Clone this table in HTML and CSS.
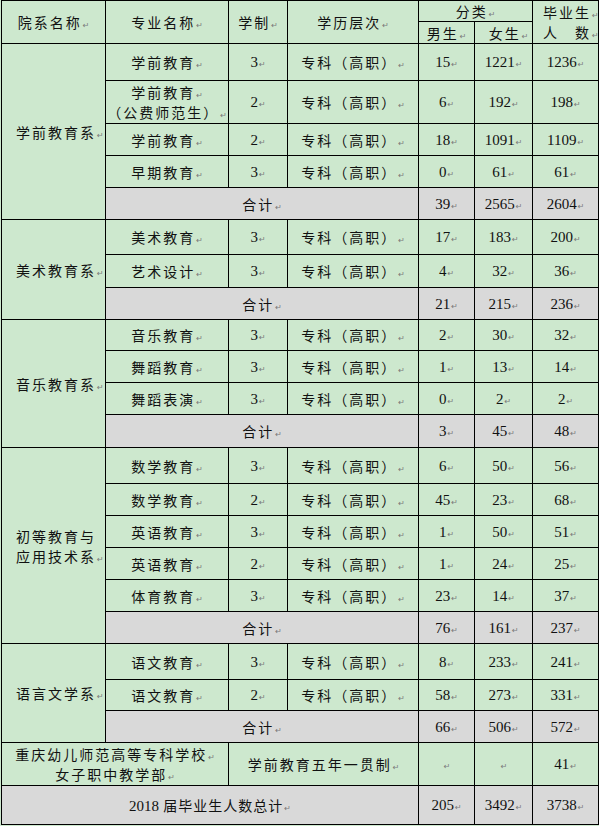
FILE: index.html
```html
<!DOCTYPE html>
<html lang="zh-CN">
<head>
<meta charset="utf-8">
<title>2018届毕业生人数</title>
<link rel="stylesheet" href="styles.css">
</head>
<body>
<table class="grid">
<colgroup>
<col class="c1"><col class="c2"><col class="c3"><col class="c4"><col class="c5"><col class="c6"><col class="c7">
</colgroup>
<tr class="r21">
<th rowspan="2">院系名称<span class="m">↵</span></th>
<th rowspan="2">专业名称<span class="m">↵</span></th>
<th rowspan="2">学制<span class="m">↵</span></th>
<th rowspan="2">学历层次<span class="m">↵</span></th>
<th colspan="2">分类<span class="m">↵</span></th>
<th rowspan="2" class="grad">毕业生<span class="m">↵</span><br>人　数<span class="m">↵</span></th>
</tr>
<tr class="r22"><th>男生<span class="m">↵</span></th><th class="fem">女生<span class="m">↵</span></th></tr>

<tr class="r37"><td rowspan="5" class="dept">学前教育系<span class="m">↵</span></td><td>学前教育<span class="m">↵</span></td><td class="n">3<span class="m">↵</span></td><td>专科（高职）<span class="m">↵</span></td><td class="n">15<span class="m">↵</span></td><td class="n">1221<span class="m">↵</span></td><td class="n">1236<span class="m">↵</span></td></tr>
<tr class="r43"><td class="two">学前教育<span class="m">↵</span><br>（公费师范生）<span class="m">↵</span></td><td class="n">2<span class="m">↵</span></td><td>专科（高职）<span class="m">↵</span></td><td class="n">6<span class="m">↵</span></td><td class="n">192<span class="m">↵</span></td><td class="n">198<span class="m">↵</span></td></tr>
<tr class="r32"><td>学前教育<span class="m">↵</span></td><td class="n">2<span class="m">↵</span></td><td>专科（高职）<span class="m">↵</span></td><td class="n">18<span class="m">↵</span></td><td class="n">1091<span class="m">↵</span></td><td class="n">1109<span class="m">↵</span></td></tr>
<tr class="r32"><td>早期教育<span class="m">↵</span></td><td class="n">3<span class="m">↵</span></td><td>专科（高职）<span class="m">↵</span></td><td class="n">0<span class="m">↵</span></td><td class="n">61<span class="m">↵</span></td><td class="n">61<span class="m">↵</span></td></tr>
<tr class="r32"><td colspan="3" class="g">合计<span class="m">↵</span></td><td class="n g">39<span class="m">↵</span></td><td class="n g">2565<span class="m">↵</span></td><td class="n g">2604<span class="m">↵</span></td></tr>

<tr class="r35"><td rowspan="3" class="dept">美术教育系<span class="m">↵</span></td><td>美术教育<span class="m">↵</span></td><td class="n">3<span class="m">↵</span></td><td>专科（高职）<span class="m">↵</span></td><td class="n">17<span class="m">↵</span></td><td class="n">183<span class="m">↵</span></td><td class="n">200<span class="m">↵</span></td></tr>
<tr class="r33"><td>艺术设计<span class="m">↵</span></td><td class="n">3<span class="m">↵</span></td><td>专科（高职）<span class="m">↵</span></td><td class="n">4<span class="m">↵</span></td><td class="n">32<span class="m">↵</span></td><td class="n">36<span class="m">↵</span></td></tr>
<tr class="r32"><td colspan="3" class="g">合计<span class="m">↵</span></td><td class="n g">21<span class="m">↵</span></td><td class="n g">215<span class="m">↵</span></td><td class="n g">236<span class="m">↵</span></td></tr>

<tr class="r31"><td rowspan="4" class="dept">音乐教育系<span class="m">↵</span></td><td>音乐教育<span class="m">↵</span></td><td class="n">3<span class="m">↵</span></td><td>专科（高职）<span class="m">↵</span></td><td class="n">2<span class="m">↵</span></td><td class="n">30<span class="m">↵</span></td><td class="n">32<span class="m">↵</span></td></tr>
<tr class="r32"><td>舞蹈教育<span class="m">↵</span></td><td class="n">3<span class="m">↵</span></td><td>专科（高职）<span class="m">↵</span></td><td class="n">1<span class="m">↵</span></td><td class="n">13<span class="m">↵</span></td><td class="n">14<span class="m">↵</span></td></tr>
<tr class="r32"><td>舞蹈表演<span class="m">↵</span></td><td class="n">3<span class="m">↵</span></td><td>专科（高职）<span class="m">↵</span></td><td class="n">0<span class="m">↵</span></td><td class="n">2<span class="m">↵</span></td><td class="n">2<span class="m">↵</span></td></tr>
<tr class="r33"><td colspan="3" class="g">合计<span class="m">↵</span></td><td class="n g">3<span class="m">↵</span></td><td class="n g">45<span class="m">↵</span></td><td class="n g">48<span class="m">↵</span></td></tr>

<tr class="r36"><td rowspan="6" class="dept two">初等教育与<br>应用技术系<span class="m">↵</span></td><td>数学教育<span class="m">↵</span></td><td class="n">3<span class="m">↵</span></td><td>专科（高职）<span class="m">↵</span></td><td class="n">6<span class="m">↵</span></td><td class="n">50<span class="m">↵</span></td><td class="n">56<span class="m">↵</span></td></tr>
<tr class="r32"><td>数学教育<span class="m">↵</span></td><td class="n">2<span class="m">↵</span></td><td>专科（高职）<span class="m">↵</span></td><td class="n">45<span class="m">↵</span></td><td class="n">23<span class="m">↵</span></td><td class="n">68<span class="m">↵</span></td></tr>
<tr class="r32"><td>英语教育<span class="m">↵</span></td><td class="n">3<span class="m">↵</span></td><td>专科（高职）<span class="m">↵</span></td><td class="n">1<span class="m">↵</span></td><td class="n">50<span class="m">↵</span></td><td class="n">51<span class="m">↵</span></td></tr>
<tr class="r32"><td>英语教育<span class="m">↵</span></td><td class="n">2<span class="m">↵</span></td><td>专科（高职）<span class="m">↵</span></td><td class="n">1<span class="m">↵</span></td><td class="n">24<span class="m">↵</span></td><td class="n">25<span class="m">↵</span></td></tr>
<tr class="r32"><td>体育教育<span class="m">↵</span></td><td class="n">3<span class="m">↵</span></td><td>专科（高职）<span class="m">↵</span></td><td class="n">23<span class="m">↵</span></td><td class="n">14<span class="m">↵</span></td><td class="n">37<span class="m">↵</span></td></tr>
<tr class="r32"><td colspan="3" class="g">合计<span class="m">↵</span></td><td class="n g">76<span class="m">↵</span></td><td class="n g">161<span class="m">↵</span></td><td class="n g">237<span class="m">↵</span></td></tr>

<tr class="r36"><td rowspan="3" class="dept">语言文学系<span class="m">↵</span></td><td>语文教育<span class="m">↵</span></td><td class="n">3<span class="m">↵</span></td><td>专科（高职）<span class="m">↵</span></td><td class="n">8<span class="m">↵</span></td><td class="n">233<span class="m">↵</span></td><td class="n">241<span class="m">↵</span></td></tr>
<tr class="r31"><td>语文教育<span class="m">↵</span></td><td class="n">2<span class="m">↵</span></td><td>专科（高职）<span class="m">↵</span></td><td class="n">58<span class="m">↵</span></td><td class="n">273<span class="m">↵</span></td><td class="n">331<span class="m">↵</span></td></tr>
<tr class="r32"><td colspan="3" class="g">合计<span class="m">↵</span></td><td class="n g">66<span class="m">↵</span></td><td class="n g">506<span class="m">↵</span></td><td class="n g">572<span class="m">↵</span></td></tr>

<tr class="r43"><td colspan="2" class="two">重庆幼儿师范高等专科学校<span class="m">↵</span><br>女子职中教学部<span class="m">↵</span></td><td colspan="2">学前教育五年一贯制<span class="m">↵</span></td><td class="n"><span class="m">↵</span></td><td class="n"><span class="m">↵</span></td><td class="n">41<span class="m">↵</span></td></tr>
<tr class="r39"><td colspan="4" class="g total"><span class="yr">2018</span> 届毕业生人数总计<span class="m">↵</span></td><td class="n g">205<span class="m">↵</span></td><td class="n g">3492<span class="m">↵</span></td><td class="n g">3738<span class="m">↵</span></td></tr>
</table>
</body>
</html>
```
FILE: styles.css
```css
html, body {
  margin: 0;
  padding: 0;
  background: #cde8ce;
}
body {
  padding: 0 0 0 1px;
}
.grid {
  border-collapse: collapse;
  table-layout: fixed;
  width: 597px;
  background: #cde8ce;
  font-family: "Noto Sans CJK SC", sans-serif;
  font-size: 14px;
  color: #111;
}
.c1 { width: 104px; }
.c2 { width: 123px; }
.c3 { width: 59px; }
.c4 { width: 131px; }
.c5 { width: 56px; }
.c6 { width: 58px; }
.c7 { width: 66px; }
.grid th, .grid td {
  border: 1px solid #000;
  padding: 0;
  text-align: center;
  vertical-align: middle;
  font-weight: normal;
  letter-spacing: 2px;
  line-height: 16px;
  white-space: nowrap;
  overflow: visible;
}
.grid td.n {
  letter-spacing: 0;
  font-family: "Liberation Serif", serif;
  font-size: 15px;
}
.grid td.g { background: #d9d9d9; }
.grid td.dept {
  text-align: left;
  padding-left: 14px;
}
.grid td.two { line-height: 20px; }
.grid th.grad {
  text-align: left;
  padding-left: 10px;
  line-height: 20px;
}
.grid th.fem { padding-left: 10px; }
.grid td.total { letter-spacing: 1px; }
.yr {
  font-family: "Liberation Serif", serif;
  font-size: 15px;
  letter-spacing: 0;
}
.m {
  font-family: "DejaVu Sans", sans-serif;
  font-size: 8px;
  line-height: 8px;
  color: #7a7a7a;
  letter-spacing: 0;
  margin-left: 1px;
}
.r21 { height: 21px; }
.r22 { height: 22px; }
.r31 { height: 31px; }
.r32 { height: 32px; }
.r33 { height: 33px; }
.r35 { height: 35px; }
.r36 { height: 36px; }
.r37 { height: 37px; }
.r39 { height: 39px; }
.r43 { height: 43px; }
```
